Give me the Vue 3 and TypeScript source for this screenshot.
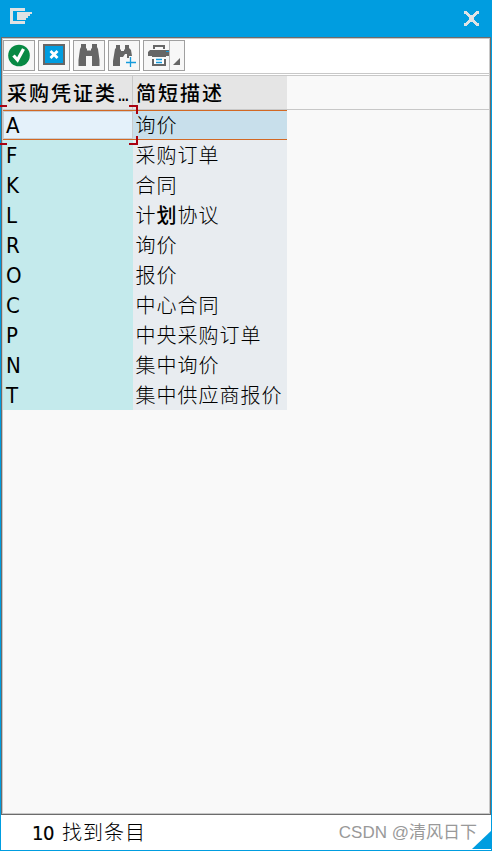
<script setup lang="ts">
interface Entry {
  code: string
  text: string
  strong?: string
  rest?: string
}

const entries: Entry[] = [
  { code: 'A', text: '询价' },
  { code: 'F', text: '采购订单' },
  { code: 'K', text: '合同' },
  { code: 'L', text: '计', strong: '划', rest: '协议' },
  { code: 'R', text: '询价' },
  { code: 'O', text: '报价' },
  { code: 'C', text: '中心合同' },
  { code: 'P', text: '中央采购订单' },
  { code: 'N', text: '集中询价' },
  { code: 'T', text: '集中供应商报价' },
]
</script>

<template>
  <div class="window">
    <header class="titlebar">
      <svg class="logo" width="22" height="16" viewBox="0 0 22 16" shape-rendering="crispEdges">
        <path d="M0 0H15V3H3V13H15V16H0Z" fill="#e0e2e3" />
        <path d="M7 4H22V6H20V8H18V10H16V12H7Z" fill="#e0e2e3" />
      </svg>
      <svg class="close" width="15" height="15" viewBox="0 0 15 15" shape-rendering="crispEdges">
        <path d="M0 0H3V1H4V2H5V3H6V4H9V3H10V2H11V1H12V0H15V3H13V4H12V5H11V6H10V9H11V10H12V11H13V12H15V15H12V14H11V13H10V12H9V11H6V12H5V13H4V14H3V15H0V12H2V11H3V10H4V9H5V6H4V5H3V4H2V3H0Z" fill="#dfe3e5" />
      </svg>
    </header>

    <main class="panel">
      <div class="toolbar">
        <button class="tool">
          <svg width="30" height="29" viewBox="0 0 30 29">
            <circle cx="15" cy="14.5" r="10.8" fill="#078943" />
            <path d="M9.5 14.5L13.5 19L19.5 8" fill="none" stroke="#fff" stroke-width="3.3" />
          </svg>
        </button>
        <button class="tool">
          <svg width="30" height="29" viewBox="0 0 30 29">
            <rect x="5" y="4" width="20" height="19" fill="#009de0" stroke="#666" stroke-width="2" />
            <path d="M11.5 10L18.5 17M18.5 10L11.5 17" stroke="#fff" stroke-width="2.8" />
          </svg>
        </button>
        <button class="tool">
          <svg width="30" height="29" viewBox="0 0 30 29" fill="#666">
            <path d="M7 3H12V7L13 8V9.500H17V8L18 7V3H23V6L24 8L25.500 19V25H18V15H12V25H4.500V19L6 8L7 6Z" />
          </svg>
        </button>
        <button class="tool">
          <svg width="30" height="29" viewBox="0 0 30 29">
            <path d="M7 4H11V8L12 9V10H15V9L16 8V4H20V7L22 9L23 15H20V17H18V13H16L14 16H11V25H4V20L6 8L7 7Z" fill="#666" />
            <path d="M21.500 16V26M17 21.500H27" stroke="#159bdc" stroke-width="1.300" />
          </svg>
        </button>
        <button class="tool tool-print">
          <svg width="25" height="29" viewBox="0 0 25 29">
            <path d="M10 8V5H20V8" fill="none" stroke="#666" stroke-width="2" />
            <path d="M6 9H25V15H22V16H8V15H4V11Z" fill="#666" />
            <path d="M22 10.500H25" stroke="#159bdc" />
            <path d="M8 16V17H22V16Z" fill="#f7f7f7" />
            <path d="M9 18V24H21V18" fill="#fff" stroke="#666" stroke-width="2" />
            <path d="M12 18.500H18M12 21.500H18" stroke="#159bdc" stroke-width="1.400" />
          </svg>
          <span class="drop">
            <svg width="14" height="29" viewBox="0 0 14 29"><path d="M3 24L10 17V24Z" fill="#666" /></svg>
          </span>
        </button>
      </div>

      <section class="content">
        <div class="head">
          <div class="head-cell code">采购凭证类<span class="dots">...</span></div>
          <div class="head-cell desc">简短描述</div>
        </div>
        <div v-for="(entry, i) in entries" :key="entry.code" class="row" :class="{ selected: i === 0 }">
          <div class="cell code">{{ entry.code }}</div>
          <div class="cell desc">{{ entry.text }}<b v-if="entry.strong">{{ entry.strong }}</b>{{ entry.rest }}</div>
          <svg v-if="i === 0" class="focus" width="138" height="40" viewBox="0 0 138 40" shape-rendering="crispEdges">
            <path d="M0 1H7M129 1H137V9M0 39H7M129 39H137V31" fill="none" stroke="#a90010" stroke-width="2" />
          </svg>
        </div>
      </section>
    </main>

    <footer class="status">
      <span class="count">10</span>
      <span class="found">找到条目</span>
      <span class="watermark">CSDN @清风日下</span>
      <svg class="grip" width="20" height="20" viewBox="0 0 20 20"><path d="M20 0V19H0Z" fill="#009de0" /></svg>
    </footer>
  </div>
</template>

<style>
body {
  margin: 0;
}
</style>

<style scoped>
.window {
  box-sizing: border-box;
  position: relative;
  width: 492px;
  height: 851px;
  display: flex;
  flex-direction: column;
  border: 1px solid #009de0;
  border-top: 0;
  background: #fff;
  color: #000;
  font-family: "DejaVu Sans Condensed", "Noto Sans CJK SC", sans-serif;
}
.titlebar {
  box-sizing: border-box;
  flex: none;
  height: 37px;
  padding: 8px 12px 0 9px;
  display: flex;
  justify-content: space-between;
  background: #009de0;
}
.close {
  margin-top: 3px;
}
.panel {
  box-sizing: border-box;
  flex: none;
  height: 778px;
  display: flex;
  flex-direction: column;
  border: 1px solid #6c6c6c;
  box-shadow: inset 0 0 0 1px #c8c8c8;
  padding: 1px;
}
.toolbar {
  box-sizing: border-box;
  height: 35px;
  padding-top: 1px;
  display: flex;
  gap: 3px;
  border-bottom: 1px solid #c8c8c8;
}
.tool {
  box-sizing: border-box;
  width: 32px;
  height: 31px;
  padding: 0;
  display: flex;
  border: 1px solid #a0a0a0;
  background: #f7f7f7;
}
.tool svg {
  display: block;
  flex: none;
}
.tool-print {
  width: 42px;
}
.drop {
  height: 29px;
  border-left: 1px solid #b8b8b8;
}
.content {
  flex: 1;
  margin-top: 1px;
  border-top: 1px solid #c8c8c8;
  background: #f9f9f9;
}
.head {
  box-sizing: border-box;
  height: 34px;
  display: flex;
  border-bottom: 1px solid #c8c8c8;
}
.head-cell {
  box-sizing: border-box;
  height: 33px;
  background: #e5e5e5;
  font-size: 20px;
  font-weight: 500;
  line-height: 36px;
  letter-spacing: 2px;
  white-space: nowrap;
}
.head-cell.code {
  padding-left: 4px;
  border-right: 1px solid #c8c8c8;
}
.head-cell.desc {
  padding-left: 3px;
}
.dots {
  letter-spacing: -2.200px;
}
.code {
  width: 130px;
}
.desc {
  width: 154px;
}
.row {
  position: relative;
  display: flex;
  height: 30px;
}
.cell {
  box-sizing: border-box;
  height: 30px;
  padding-left: 3px;
  font-size: 20px;
  font-weight: 300;
  line-height: 32px;
  letter-spacing: 1px;
  white-space: nowrap;
}
.cell.code {
  background: #c4eaec;
  font-size: 22px;
  font-weight: 400;
}
.cell.desc {
  padding-left: 2.500px;
  background: #e8ecf0;
}
.cell b {
  font-weight: 500;
}
.selected .cell {
  border-top: 1px solid #d26823;
  border-bottom: 1px solid #d26823;
  line-height: 30px;
}
.selected .cell.code {
  background: #e4f1fa;
  box-shadow: inset 0 0 0 1px #c8ccd0;
}
.selected .cell.desc {
  background: #c8dfeb;
}
.selected {
  z-index: 1;
}
.focus {
  position: absolute;
  left: -3px;
  top: -5px;
}
.status {
  flex: 1;
  display: flex;
  align-items: center;
  padding-left: 31px;
}
.count {
  width: 30px;
  font-size: 20px;
  letter-spacing: -0.500px;
  -webkit-text-stroke: 0.200px #000;
}
.found {
  font-size: 20px;
  font-weight: 300;
  letter-spacing: 1px;
  line-height: 34px;
}
.watermark {
  margin-left: auto;
  margin-right: 14px;
  color: #999;
  font-family: "Liberation Sans", "Noto Sans CJK SC", sans-serif;
  font-size: 17px;
  line-height: 34px;
}
.grip {
  position: absolute;
  right: -1px;
  bottom: 0;
}
</style>
